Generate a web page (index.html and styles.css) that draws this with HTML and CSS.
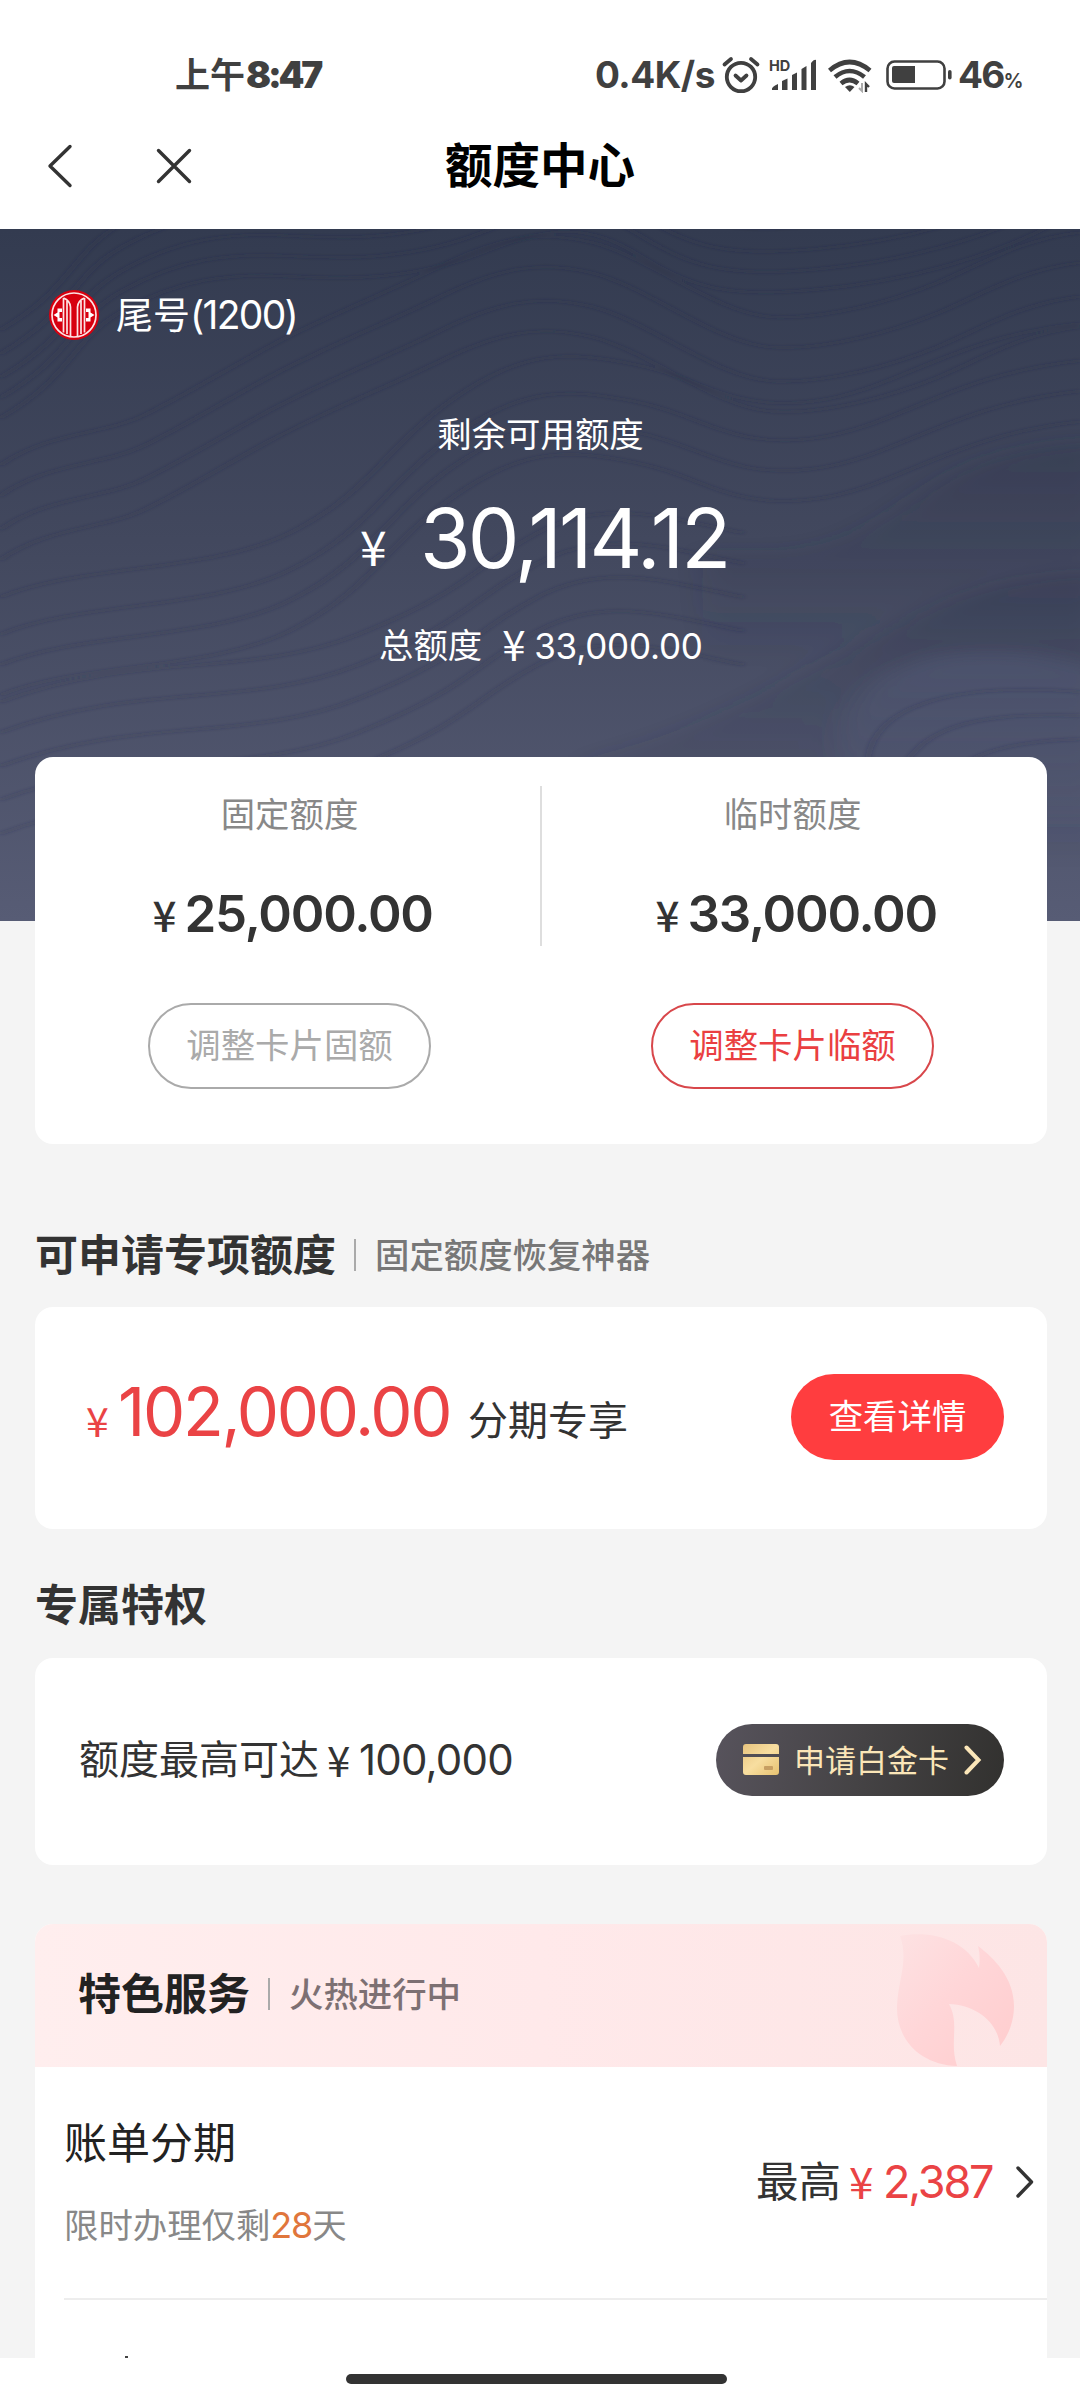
FILE: index.html
```html
<!DOCTYPE html>
<html lang="zh-CN">
<head>
<meta charset="utf-8">
<title>额度中心</title>
<link rel="stylesheet" href="styles.css">
</head>
<body>
<div class="screen">
  <header class="top">
    <div class="status">
      <span class="time">上午<b>8:47</b></span>
      <span class="speed">0.4K/s</span>
      <svg class="alarm" width="40" height="38" viewBox="0 0 40 38" fill="none" stroke="#404040" stroke-width="3.8" stroke-linecap="round" stroke-linejoin="round"><circle cx="20" cy="21" r="14.2"/><path d="M14.5 19.5l5.5 5 5.5-5M3.5 8.500l6.500-5.500M36.500 8.500L30 3"/></svg>
      <svg class="signal" width="47" height="32" viewBox="0 0 47 32" fill="#404040"><text x="-1" y="12" font-size="14.5" font-weight="700">HD</text><path d="M2 31q-1-3 6-6v6zM12 31v-9l5.500-2.500v11.500zM22 31v-15l5-2.500v17.500zM31.500 31v-21l5-3v24zM41 31v-27q3-4 5-3v30z"/></svg>
      <svg class="wifi" width="44" height="34" viewBox="0 0 44 34" fill="none" stroke="#404040" stroke-width="4.600"><path d="M1.500 11.500Q21.500-5.500 42 11.500M7 18Q21.500 6 36.500 18M13 24.500Q21.500 17.500 30 24.500"/><path d="M17 28q5-3.500 9.500 0l-4.700 5z" fill="#404040" stroke="none"/><path d="M34 24v8l-3-3" stroke="#aaa" stroke-width="2"/><path d="M38 33v-8l3 3" stroke-width="2.400"/></svg>
      <svg class="battery" width="67" height="30" viewBox="0 0 67 30"><rect x="1.500" y="1.500" width="57" height="27" rx="7" fill="none" stroke="#404040" stroke-width="2.600"/><path d="M8 6h21v17H8q-2 0-2-2V8q0-2 2-2z" fill="#404040"/><rect x="62" y="10" width="3.600" height="9.500" rx="1.800" fill="#404040"/></svg>
      <span class="level">46<small>%</small></span>
    </div>
    <div class="nav">
      <div class="nav-icons">
        <svg width="26" height="44" viewBox="0 0 26 44"><path d="M23 2.500L3 22l20 19.500"/></svg>
        <svg width="36" height="36" viewBox="0 0 36 36"><path d="M2.500 2.500l31 31M33.500 2.500l-31 31"/></svg>
      </div>
      <h1>额度中心</h1>
      <div class="nav-side"></div>
    </div>
  </header>

  <main>
    <section class="hero">
      <svg class="waves" viewBox="0 0 1568 2048" preserveAspectRatio="none" fill="none">
        <defs>
          <filter id="soft" x="-10%" y="-10%" width="120%" height="120%"><feGaussianBlur stdDeviation="4"/></filter>
          <filter id="softer" x="-20%" y="-20%" width="140%" height="140%"><feGaussianBlur stdDeviation="22"/></filter>
          <linearGradient id="shade" x1="0" y1="0" x2="0" y2="1"><stop offset="0" stop-color="#2f354c" stop-opacity=".32"/><stop offset="1" stop-color="#2f354c" stop-opacity="0"/></linearGradient>
          <linearGradient id="dome" x1="0" y1="0" x2="0" y2="1"><stop offset="0" stop-color="#7079a0" stop-opacity=".2"/><stop offset="1" stop-color="#7079a0" stop-opacity=".04"/></linearGradient>
          <path id="w1" d="M0 560C110 430 100 330 180 240S330 130 420 140S600 150 700 70S850 -20 930 80S1060 200 1180 180S1450 90 1568 -60"/>
          <path id="w2" d="M0 790C70 690 150 700 210 640S300 540 380 450S560 280 640 200S780 90 860 130S1040 340 1120 350S1300 300 1360 250S1480 120 1568 100"/>
          <path id="w3" d="M0 1150C120 1050 300 1080 420 960S560 700 660 560S820 420 920 460S1060 600 1180 570S1380 380 1568 340"/>
          <path id="w4" d="M0 1400C200 1250 360 1330 520 1200S680 1010 780 900S980 860 1080 900"/>
        </defs>
        <g filter="url(#softer)">
          <path d="M1600 630C1380 650 1350 790 1260 880S1120 950 1020 950V1300H1600z" fill="url(#shade)"/>
          <path d="M1600 1020C1400 1030 1340 1140 1220 1260S1020 1480 850 1568V1900H1600z" fill="url(#shade)"/>
          <path d="M1220 1568C1210 1400 1290 1270 1400 1260S1530 1280 1600 1300V1750H1250z" fill="url(#dome)"/>
        </g>
        <g stroke="#23293f" stroke-opacity=".2" stroke-width="8" filter="url(#soft)">
          <use href="#w1" y="-260"/><use href="#w1" y="-190"/><use href="#w1" y="-120"/><use href="#w1" y="-60"/><use href="#w1"/>
          <use href="#w2" y="-90"/><use href="#w2"/><use href="#w2" y="100"/><use href="#w2" y="190"/>
          <use href="#w3" y="-60"/><use href="#w3" y="50"/><use href="#w3" y="140"/><use href="#w3" y="230"/>
          <use href="#w4"/><use href="#w4" y="90"/><use href="#w4" y="190"/><use href="#w4" y="290"/><use href="#w4" y="390"/>
          <path d="M1260 1568C1270 1420 1370 1340 1568 1370M1300 1640C1330 1480 1400 1430 1568 1440M1340 1700C1390 1560 1440 1520 1568 1510"/>
        </g>
      </svg>
      <div class="account">
        <svg width="50" height="50" viewBox="0 0 50 50" fill="none" stroke="#fde3e4" stroke-width="1.700"><circle cx="25" cy="25" r="25" fill="#d7000f" stroke="none"/><circle cx="25" cy="25" r="22"/><path d="M14.500 8v34.500M21.500 46V17q-.5-6.500-7-9M28.500 46V17q.5-6.500 7-9M35.500 8v34.500M18 11v33M32 11v33"/><path d="M13 18.500v3.500h-2.500v6H13v3.500H8.500v-4L4.500 25l4-2.500v-4zM37 18.500v3.500h2.500v6H37v3.500h4.500v-4l4-2.500-4-2.500v-4z" fill="#fff" stroke="none"/></svg>
        <span>尾号<i>(1200)</i></span>
      </div>
      <div class="remain-label">剩余可用额度</div>
      <div class="remain"><span class="yen">¥</span><span class="num">30,114.12</span></div>
      <div class="total"><span>总额度</span><span class="yen">¥</span><span class="num">33,000.00</span></div>
    </section>

    <section class="card limits">
      <div class="limit">
        <div class="limit-label">固定额度</div>
        <div class="limit-sum"><span class="yen">¥</span><span class="num">25,000.00</span></div>
        <div class="outline-btn">调整卡片固额</div>
      </div>
      <div class="limit-line"></div>
      <div class="limit">
        <div class="limit-label">临时额度</div>
        <div class="limit-sum"><span class="yen">¥</span><span class="num">33,000.00</span></div>
        <div class="outline-btn red">调整卡片临额</div>
      </div>
    </section>

    <h2 class="heading special-head">可申请专项额度<span class="bar"></span><em>固定额度恢复神器</em></h2>
    <section class="card special">
      <div class="special-sum"><span class="yen">¥</span><span class="num">102,000.00</span><span class="note">分期专享</span></div>
      <div class="detail-btn">查看详情</div>
    </section>

    <h2 class="heading perk-head">专属特权</h2>
    <section class="card perk">
      <div class="perk-text">额度最高可达<span class="yen">¥</span><span class="num">100,000</span></div>
      <div class="platinum">
        <svg width="36" height="32" viewBox="0 0 36 32"><defs><linearGradient id="gold" x1="0" y1="0" x2="1" y2="1"><stop offset="0" stop-color="#e8c47e"/><stop offset=".5" stop-color="#f8dea0"/><stop offset="1" stop-color="#e6c170"/></linearGradient></defs><path d="M3 0h30q3 0 3 3v7H0V3q0-3 3-3zM0 13h36v15q0 3-3 3H3q-3 0-3-3z" fill="url(#gold)"/><rect x="21" y="22" width="9" height="4" rx="1" fill="#c79f62"/></svg>
        <span>申请白金卡</span>
        <svg width="18" height="30" viewBox="0 0 18 30"><path d="M2.500 2.500L14.500 15 2.500 27.500" fill="none" stroke="#fbe6b8" stroke-width="4" stroke-linecap="round"/></svg>
      </div>
    </section>

    <section class="services">
      <div class="services-head">
        <h2 class="heading">特色服务<span class="bar"></span><em>火热进行中</em></h2>
        <svg width="120" height="133" viewBox="0 0 120 133"><defs><linearGradient id="flame" x1="0" y1="0" x2="1" y2="1"><stop offset="0" stop-color="#fde2e3"/><stop offset=".45" stop-color="#ffd6d8"/><stop offset="1" stop-color="#ffcccd"/></linearGradient></defs><path d="M4 2C34-4 69 5 83 34 84 27 84 19 82 12 98 24 118 44 118 72 118 88 112 102 104 112 102 88 80 71 53 70 64 90 53 108 61 132 25 131 0 106 1 72 2 46 13 26 4 2z" fill="url(#flame)"/></svg>
      </div>
      <div class="service">
        <div>
          <div class="service-name">账单分期</div>
          <div class="service-sub">限时办理仅剩<b>28</b>天</div>
        </div>
        <div class="service-max">最高<span class="yen">¥</span><span class="num">2,387</span><svg width="20" height="34" viewBox="0 0 20 34"><path d="M3 3l13.500 14L3 31" fill="none" stroke="#333" stroke-width="3.400" stroke-linecap="round" stroke-linejoin="round"/></svg></div>
      </div>
      <div class="service-next"><i></i></div>
    </section>
  </main>

  <footer class="home"><div></div></footer>
</div>
</body>
</html>
```

FILE: styles.css
```css
* { box-sizing: border-box; }
body {
  margin: 0;
  background: #f4f4f4;
  color: #333;
  font-family: Inter, "Noto Sans CJK SC", sans-serif;
}
svg { display: block; flex: none; }
h1, h2 { margin: 0; }
em, i { font-style: normal; }
.screen {
  width: 1080px;
  height: 2400px;
  display: flex;
  flex-direction: column;
  overflow: hidden;
}
main { flex: 1; overflow: hidden; padding: 0 33px 0 35px; }
.yen { font-family: "Noto Sans CJK SC", sans-serif; }
.num, .yen, .time, .speed, .level { white-space: nowrap; }

/* status bar and navigation */
.top { height: 229px; background: #fff; }
.status {
  height: 108px;
  padding: 44px 0 0 175px;
  display: flex;
  align-items: flex-start;
  color: #404040;
  font-weight: 700;
  font-size: 35px;
  line-height: 62px;
}
.time { width: 420px; }
.time b { font-size: 37px; letter-spacing: -3.2px; margin-left: 1px; }
.speed { width: 125px; font-size: 37px; letter-spacing: -.5px; }
.alarm { margin: 12px 0 0 1px; }
.signal { margin: 15px 0 0 9px; overflow: visible; }
.wifi { margin: 15px 0 0 11px; }
.battery { margin: 16px 0 0 14px; }
.level { margin-left: 5px; font-size: 37px; letter-spacing: -1.8px; }
.level small { font-size: 20px; font-weight: 600; }
.nav {
  height: 121px;
  padding: 0 47px 6px;
  display: flex;
  align-items: center;
  justify-content: space-between;
}
.nav-icons, .nav-side { width: 200px; }
.nav-icons { display: flex; align-items: center; gap: 83px; }
.nav-icons svg { fill: none; stroke: #333; stroke-width: 3.4; stroke-linecap: round; stroke-linejoin: round; }
h1 { font-size: 47.5px; line-height: 70px; font-weight: 700; color: #000; }

/* hero */
.hero {
  position: relative;
  margin: 0 -33px 0 -35px;
  height: 692px;
  background: linear-gradient(#333b50, #42485e 45%, #575c75);
  color: #fff;
  padding-top: 55px;
}
.hero > div { position: relative; }
.waves { position: absolute; inset: 0; width: 100%; height: 100%; }
.account {
  display: flex;
  align-items: center;
  gap: 17px;
  height: 61px;
  padding-left: 49px;
  font-size: 37px;
  line-height: 61px;
}
.account i { font-size: 39px; letter-spacing: -1.7px; }
.remain-label {
  margin-top: 60px;
  height: 60px;
  line-height: 60px;
  font-size: 34.4px;
  text-align: center;
  padding-left: 1px;
}
.remain { margin-top: 24px; height: 100px; line-height: 100px; display: flex; padding-left: 360px; }
.remain .yen { width: 60px; font-size: 48px; line-height: 112px; }
.remain .num { font-size: 82px; letter-spacing: -2.8px; }
.total { margin-top: 27px; height: 60px; line-height: 60px; display: flex; padding-left: 379px; font-size: 34.4px; }
.total .yen { margin-left: 20px; width: 32px; font-size: 42px; line-height: 54px; }
.total .num { font-size: 35px; letter-spacing: -.2px; }

/* cards */
.card { background: #fff; border-radius: 18px; }
.limits { position: relative; margin-top: -164px; height: 387px; padding: 29px 4px 0; display: flex; }
.limit { flex: 1; display: flex; flex-direction: column; align-items: center; }
.limit-line { width: 2px; height: 160px; background: #dedede; }
.limit-label { font-size: 34.4px; line-height: 58px; color: #888; }
.limit-sum { margin-top: 40px; display: flex; line-height: 60px; font-weight: 600; padding-left: 6px; }
.limit-sum .yen { font-size: 42px; width: 32px; font-weight: 500; }
.limit-sum .num { font-size: 51px; letter-spacing: -1.2px; width: 248px; }
.outline-btn {
  margin-top: 59px;
  width: 283px;
  height: 86px;
  border: 2px solid #aaa;
  border-radius: 43px;
  font-size: 34.4px;
  line-height: 82px;
  text-align: center;
  color: #aaa;
}
.outline-btn.red { border-color: #d8474b; color: #ea3f41; }

.heading { display: flex; align-items: center; font-size: 43px; line-height: 64px; font-weight: 600; }
.heading .bar { width: 2px; height: 32px; margin: 0 19px 0 18px; background: #aaa; }
.heading em { font-size: 34.4px; font-weight: 500; color: #777; padding-top: 2px; }
.special-head { margin-top: 78px; }
.special { margin-top: 19px; height: 222px; padding: 67px 43px 0 51px; display: flex; justify-content: space-between; }
.special-sum { display: flex; line-height: 76px; color: #ea4345; }
.special-sum .yen { width: 32px; font-size: 41px; line-height: 90px; }
.special-sum .num { width: 350px; font-size: 67px; letter-spacing: -2.3px; }
.special-sum .note { font-size: 40px; line-height: 93px; color: #333; }
.detail-btn { width: 213px; height: 86px; border-radius: 43px; background: #ff3d3f; color: #fff; font-size: 34.4px; line-height: 86px; text-align: center; }
.perk-head { margin-top: 44px; }
.perk { margin-top: 21px; height: 207px; padding: 66px 43px 0 44px; display: flex; justify-content: space-between; }
.perk-text { display: flex; font-size: 40px; line-height: 72px; }
.perk-text .yen { margin-left: 8px; width: 32px; font-size: 42px; line-height: 69px; }
.perk-text .num { font-size: 42px; letter-spacing: -.8px; }
.platinum {
  width: 288px;
  height: 72px;
  padding-left: 27px;
  border-radius: 36px;
  background: linear-gradient(100deg, #57535c, #454345 50%, #32312f);
  display: flex;
  align-items: center;
  color: #fbe6b8;
  font-size: 31px;
  line-height: 72px;
}
.platinum span { margin: 0 15px 0 15px; padding-top: 1px; }

/* services */
.services { margin-top: 59px; height: 460px; background: #fff; border-radius: 18px 18px 0 0; }
.services-head {
  height: 143px;
  padding: 10px 31px 0 43px;
  display: flex;
  justify-content: space-between;
  border-radius: 18px 18px 0 0;
  background: linear-gradient(90deg, #ffeeee, #ffe9ea 50%, #fde5e5);
}
.services-head .heading { color: #222; height: 120px; }
.services-head em { color: #7d7073; }
.service {
  margin-left: 29px;
  height: 233px;
  border-bottom: 2px solid #ededed;
  display: flex;
  justify-content: space-between;
}
.service-name { margin-top: 44px; font-size: 43px; line-height: 64px; color: #222; }
.service-sub { margin-top: 22px; font-size: 34.4px; line-height: 56px; color: #888; }
.service-sub b { font-weight: 400; font-size: 36px; color: #e0763c; letter-spacing: -1.2px; }
.service-max { display: flex; padding: 83px 12px 0 0; font-size: 42.5px; line-height: 64px; }
.service-max .yen { margin-left: 8px; width: 34px; font-size: 44px; line-height: 60px; color: #ea4345; }
.service-max .num { width: 132px; font-size: 45px; letter-spacing: -2.2px; color: #ea4345; }
.service-max svg { margin-top: 15px; }
.service-next { padding: 56px 0 0 90px; }
.service-next i { display: block; width: 3px; height: 2px; background: #444; }

.home { height: 42px; padding-top: 16px; background: #fff; }
.home div { width: 381px; height: 10px; margin-left: 346px; border-radius: 5px; background: #333; }
```
